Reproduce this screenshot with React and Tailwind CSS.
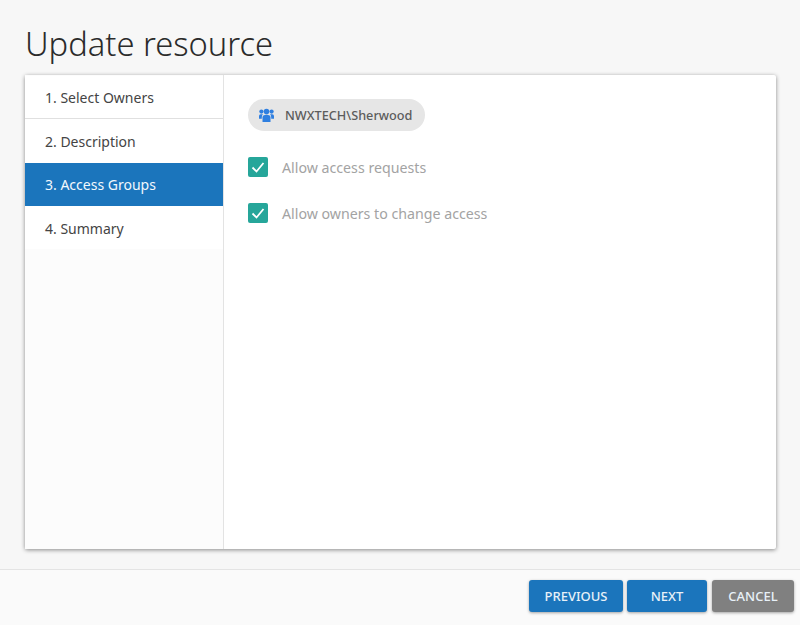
import React from "react";

const font = "font-['Noto_Sans','Open_Sans',sans-serif]";

function Step({ label, active, border, h, nudge }) {
  return (
    <div
      className={`${h} flex items-center pl-5 text-[14px] ${
        active ? "bg-[#1b75bc] text-[#f2f8fc]" : "bg-white text-[#444]"
      } ${border ? "border-b border-[#e0e0e0]" : ""} ${nudge ? "pt-0.5" : ""}`}
    >
      {label}
    </div>
  );
}

function Check({ label }) {
  return (
    <div className="flex items-center h-5 gap-[14px]">
      <span className="w-5 h-5 rounded-[2px] bg-[#26a69a] flex items-center justify-center">
        <svg width="20" height="20" viewBox="0 0 20 20" fill="none">
          <path d="M4.5 10.5 L8.5 14.5 L15.5 6" stroke="#fff" strokeWidth="1.8" />
        </svg>
      </span>
      <span className="text-[14.2px] text-[#a3a3a3] translate-y-px">{label}</span>
    </div>
  );
}

function Btn({ label, w, gray }) {
  return (
    <button
      className={`h-8 rounded-[3px] text-[13px] font-medium text-[#e8f1f8] shadow-[0_1px_3px_rgba(0,0,0,0.35)] ${w} ${
        gray ? "bg-[#808080]" : "bg-[#1b75bc]"
      }`}
    >
      <span className="relative top-px">{label}</span>
    </button>
  );
}

export default function App() {
  return (
    <div className={`w-[800px] h-[625px] flex flex-col bg-[#f7f7f7] overflow-hidden ${font}`}>
      <div className="h-[75px] pl-[25px] pt-[21px] shrink-0">
        <h1 className="text-[32.7px] leading-[46px] font-light text-[#2b2b2b]">Update resource</h1>
      </div>
      <div className="ml-[25px] w-[751px] h-[474px] shrink-0 flex bg-white rounded-[2px] shadow-[0_1px_4px_rgba(0,0,0,0.45)]">
        <div className="w-[199px] shrink-0 border-r border-[#e3e3e3] bg-[#fcfcfc] pt-px">
          <Step label="1. Select Owners" border h="h-[43px]" />
          <Step label="2. Description" h="h-[44px]" />
          <Step label="3. Access Groups" active h="h-[43px]" />
          <Step label="4. Summary" h="h-[43px]" nudge />
        </div>
        <div className="flex-1 pl-6 pt-6">
          <div className="inline-flex items-center h-8 rounded-full bg-[#e6e6e6] pl-[11px] pr-[13px] gap-[11px]">
            <svg width="15" height="15" viewBox="0 0 15 15" fill="#2f7fe0">
              <circle cx="7.5" cy="3.6" r="2.8" />
              <circle cx="2.4" cy="3.6" r="2.1" />
              <circle cx="12.6" cy="3.6" r="2.1" />
              <path d="M3.5 14 V9.5 Q3.5 7 6 7 H9 Q11.5 7 11.5 9.5 V14 Z" />
              <path d="M0 10.8 V8 Q0 6.2 1.8 6.2 H4 Q2.8 7.4 2.8 9.2 V10.8 Z" />
              <path d="M15 10.8 V8 Q15 6.2 13.2 6.2 H11 Q12.2 7.4 12.2 9.2 V10.8 Z" />
            </svg>
            <span className="text-[12.7px] text-[#5c5c5c] font-medium translate-y-px">NWXTECH\Sherwood</span>
          </div>
          <div className="mt-[26px] flex flex-col gap-[26px]">
            <Check label="Allow access requests" />
            <Check label="Allow owners to change access" />
          </div>
        </div>
      </div>
      <div className="mt-5 flex-1 border-t border-[#e4e4e4] bg-[#fafafa] flex justify-end items-start pt-[10px] pr-1.5">
        <div className="flex">
          <Btn label="PREVIOUS" w="w-[94px]" />
          <div className="w-1" />
          <Btn label="NEXT" w="w-[80px]" />
          <div className="w-[5px]" />
          <Btn label="CANCEL" w="w-[82px]" gray />
        </div>
      </div>
    </div>
  );
}
